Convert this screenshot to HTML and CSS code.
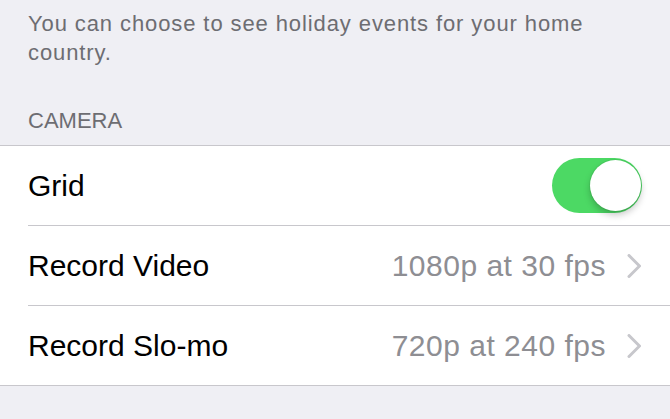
FILE: index.html
```html
<!DOCTYPE html>
<html>
<head>
<meta charset="utf-8">
<link rel="stylesheet" href="styles.css">
</head>
<body>
<div class="page">
  <p class="footnote">You can choose to see holiday events for your home country.</p>
  <div class="section-header">CAMERA</div>
  <div class="group">
    <div class="row">
      <span class="label">Grid</span>
      <span class="toggle on"><span class="knob"></span></span>
    </div>
    <div class="row">
      <span class="label">Record Video</span>
      <span class="detail">
        <span class="value">1080p at 30 fps</span>
        <svg class="chevron" width="15" height="24" viewBox="0 0 15 24"><path d="M2 1.5 L12.5 12 L2 22.5" fill="none" stroke="#c7c7cc" stroke-width="3" stroke-linecap="round" stroke-linejoin="round"/></svg>
      </span>
    </div>
    <div class="row">
      <span class="label">Record Slo-mo</span>
      <span class="detail">
        <span class="value">720p at 240 fps</span>
        <svg class="chevron" width="15" height="24" viewBox="0 0 15 24"><path d="M2 1.5 L12.5 12 L2 22.5" fill="none" stroke="#c7c7cc" stroke-width="3" stroke-linecap="round" stroke-linejoin="round"/></svg>
      </span>
    </div>
  </div>
</div>
</body>
</html>
```
FILE: styles.css
```css
html, body {
  margin: 0;
  padding: 0;
  background: #efeff4;
}

.page {
  font-family: "Liberation Sans", Arial, sans-serif;
  padding-top: 9px;
  height: 419px;
  overflow: hidden;
}

.footnote {
  margin: 0;
  padding: 0 28px;
  font-size: 22px;
  line-height: 29px;
  letter-spacing: 0.9px;
  color: #6d6d72;
}

.section-header {
  margin-top: 39px;
  padding: 0 28px 10px;
  font-size: 22px;
  line-height: 29px;
  color: #6d6d72;
}

.group {
  background: #fff;
  border-top: 1px solid #c8c7cc;
  border-bottom: 1px solid #c8c7cc;
}

.row {
  display: flex;
  align-items: center;
  justify-content: space-between;
  height: 79px;
  margin-left: 28px;
  padding-right: 28px;
  box-sizing: border-box;
}

.row + .row {
  border-top: 1px solid #c8c7cc;
  height: 80px;
}

.label {
  font-size: 30px;
  line-height: 34px;
  color: #000;
}

.detail {
  display: flex;
  align-items: center;
  gap: 21px;
}

.value {
  font-size: 30px;
  line-height: 34px;
  letter-spacing: 0.5px;
  color: #8e8e93;
}

.chevron {
  display: block;
}

.toggle {
  position: relative;
  display: block;
  width: 90px;
  height: 55px;
  border-radius: 28px;
  background: #4cd964;
  margin-right: 0;
}

.knob {
  position: absolute;
  top: 2px;
  right: 1px;
  width: 51px;
  height: 51px;
  border-radius: 50%;
  background: #fff;
  box-shadow: 0 4px 7px rgba(0, 0, 0, 0.22), 0 0 0 1px rgba(0, 0, 0, 0.05);
}
```
